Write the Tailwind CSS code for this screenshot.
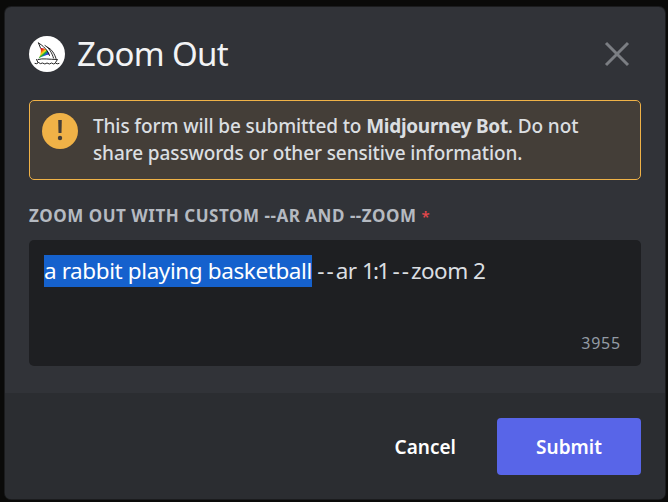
<!DOCTYPE html>
<html lang="en">
<head>
    <meta charset="UTF-8">
    <meta name="viewport" content="width=device-width, initial-scale=1.0">
    <title>Zoom Out</title>
    <script src="https://cdn.jsdelivr.net/npm/@tailwindcss/browser@4"></script>
</head>
<body class="h-screen overflow-hidden bg-[#0a0a09] pt-[7px] pl-[5px] font-['Noto_Sans',sans-serif]">

    <div class="flex h-[492px] w-[660px] flex-col overflow-hidden rounded-md bg-[#313338] shadow-[0_0_0_1px_#1b1c1e]">
        <!-- Header -->
        <div class="flex h-[93px] items-center pl-6 pr-[35px]">
            <svg class="size-9 shrink-0" viewBox="0 0 36 36" fill="none">
                <defs>
                    <linearGradient id="sail" x1="12" y1="12" x2="19" y2="20" gradientUnits="userSpaceOnUse">
                        <stop offset="0.15" stop-color="#e01f1f"/>
                        <stop offset="0.32" stop-color="#f98012"/>
                        <stop offset="0.45" stop-color="#fbe31a"/>
                        <stop offset="0.6" stop-color="#16a63f"/>
                        <stop offset="0.76" stop-color="#1f4fe0"/>
                        <stop offset="0.95" stop-color="#7a1fb0"/>
                    </linearGradient>
                </defs>
                <circle cx="18" cy="18" r="18" fill="#fff"/>
                <path d="M11.500 12C15.500 11.500 19.500 14.500 20.500 18.500C17 19 13 20.500 9.500 22.500C11.500 19 12.500 16 11.500 12Z" fill="url(#sail)"/>
                <g stroke="#111" stroke-width="0.9" stroke-linejoin="round" stroke-linecap="round">
                    <path d="M9.500 7C14 9.500 19 14.500 20.500 19.500M9.500 7L11.500 12"/>
                    <path d="M16 9.500C20 11.500 23 17 24.500 22M18 11C23 13 25.500 18 27 22.500"/>
                    <path d="M9 23.500C14 22 20 23.500 28.500 23.500L26.500 26.500M7.500 23.500L9 26.500"/>
                    <path d="M6 27.500Q8 28.500 9.500 26.500Q11.500 28.500 13.500 27Q16 29 18 27Q20.500 29 22.500 27Q25 29 26.500 27Q28 28.500 30 27.500"/>
                </g>
            </svg>
            <h1 class="ml-3 whitespace-nowrap text-[33px] leading-10 tracking-[-0.65px] text-[#f2f3f5]">Zoom Out</h1>
            <svg class="ml-auto size-[26px]" viewBox="0 0 26 26" fill="none" stroke="#7b7e83" stroke-width="3">
                <path d="M2 2L24 24M24 2L2 24"/>
            </svg>
        </div>

        <!-- Warning notice -->
        <div class="mx-6 flex h-20 shrink-0 rounded-[5px] border border-[#f0b247] bg-[#443e38] pt-3 pl-3">
            <svg class="size-9 shrink-0" viewBox="0 0 36 36">
                <circle cx="18" cy="18" r="18" fill="#f0b247"/>
                <path d="M16.200 7H19.800L19.500 20H16.500Z" fill="#443e38"/>
                <circle cx="18" cy="25" r="2.200" fill="#443e38"/>
            </svg>
            <p class="ml-[15px] whitespace-nowrap text-[19px] leading-[27px] font-medium tracking-[-0.11px] text-[#dbdee1]">This form will be submitted to <b class="font-bold tracking-[-0.3px]">Midjourney Bot</b>. Do not<br>share passwords or other sensitive information.</p>
        </div>

        <!-- Prompt field -->
        <label class="mt-6 ml-6 whitespace-nowrap text-[17px] leading-6 font-bold tracking-[0.53px] text-[#b5bac1]">ZOOM OUT WITH CUSTOM --AR AND --ZOOM <span class="text-[15px] font-medium text-[#e8484c]">*</span></label>
        <div class="mx-6 mt-3 flex h-[126px] shrink-0 flex-col justify-between rounded-[5px] bg-[#1e1f22] px-[15px] pt-[15px] pb-[11px]">
            <p class="flex whitespace-pre text-[22.500px] leading-8 tracking-[-0.4px] text-[#dbdee1]"><span class="bg-[#1561cd] text-white">a rabbit playing basketball</span><span class="tracking-[-0.5px]"> <span class="tracking-[2px]">--</span>ar <span class="tracking-[-1.800px]">1:1 </span><span class="tracking-[2px]">--</span>zoom 2</span></p>
            <span class="mr-[5px] self-end text-base leading-6 tracking-[0.8px] text-[#949ba4]">3955</span>
        </div>

        <!-- Footer -->
        <div class="mt-auto flex h-[106px] shrink-0 items-center justify-end gap-[41px] bg-[#2b2d31] pr-6 text-[19px] font-semibold text-white">
            <button class="pt-0.5">Cancel</button>
            <button class="h-[57px] w-36 rounded-[4px] bg-[#5865e8] pt-0.5">Submit</button>
        </div>
    </div>

</body>
</html>
